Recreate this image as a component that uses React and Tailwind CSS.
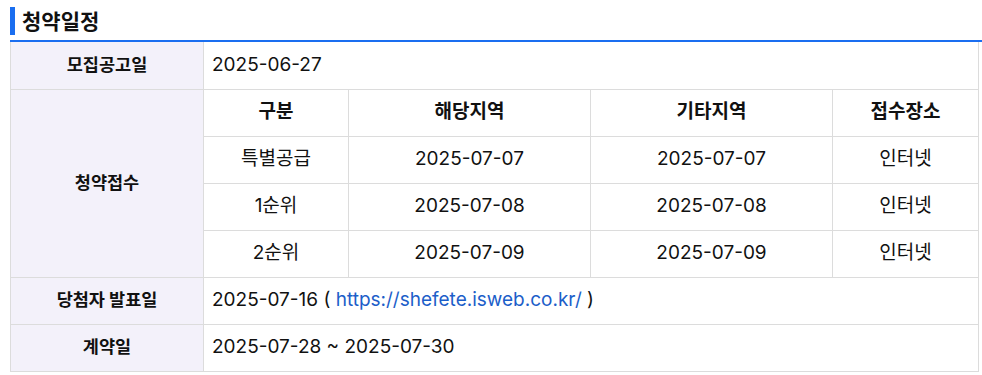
const font = { fontFamily: 'Inter, "Noto Sans CJK KR", sans-serif' };

const rows = [
  ['특별공급', '2025-07-07', '2025-07-07', '인터넷'],
  ['1순위', '2025-07-08', '2025-07-08', '인터넷'],
  ['2순위', '2025-07-09', '2025-07-09', '인터넷'],
];

const th = 'h-[47px] bg-[#f3f1fa] border border-[#dcdcdc] text-center font-bold text-[17.5px] text-[#111]';
const td = 'h-[47px] border border-[#dcdcdc] text-center text-[19px] text-[#111]';
const tdLeft = 'h-[47px] border border-[#dcdcdc] text-left pl-[8px] text-[19px] text-[#111]';

export default function App() {
  return (
    <div className="bg-white w-[982px] h-[375px] pl-[10px] pt-[7px]" style={font}>
      <div className="flex items-center h-[28px] mb-[5px]">
        <div className="w-[5px] h-[28px] bg-[#1a6ef0]" />
        <h2 className="ml-[7px] text-[21px] font-bold text-[#111] leading-none">청약일정</h2>
      </div>
      <div className="h-[2px] bg-[#1a6ef0]" />
      <table className="w-[968px] border-collapse table-fixed">
        <colgroup>
          <col className="w-[193px]" />
          <col className="w-[145px]" />
          <col className="w-[242px]" />
          <col className="w-[242px]" />
          <col className="w-[146px]" />
        </colgroup>
        <tbody>
          <tr>
            <th className={th + ' border-t-0'}>모집공고일</th>
            <td className={tdLeft + ' border-t-0'} colSpan={4}>2025-06-27</td>
          </tr>
          <tr>
            <th className={th} rowSpan={4}>청약접수</th>
            <td className={td + ' font-bold text-[17.5px]'}>구분</td>
            <td className={td + ' font-bold text-[17.5px]'}>해당지역</td>
            <td className={td + ' font-bold text-[17.5px]'}>기타지역</td>
            <td className={td + ' font-bold text-[17.5px]'}>접수장소</td>
          </tr>
          {rows.map((r) => (
            <tr key={r[0]}>
              {r.map((c, i) => (
                <td key={i} className={td + (i === 0 || i === 3 ? ' text-[17.5px]' : '')}>{c}</td>
              ))}
            </tr>
          ))}
          <tr>
            <th className={th}>당첨자 발표일</th>
            <td className={tdLeft} colSpan={4}>
              2025-07-16 ( <a href="#" className="text-[#1c5ec9]">https://shefete.isweb.co.kr/</a> )
            </td>
          </tr>
          <tr>
            <th className={th}>계약일</th>
            <td className={tdLeft} colSpan={4}>2025-07-28 ~ 2025-07-30</td>
          </tr>
        </tbody>
      </table>
    </div>
  );
}
